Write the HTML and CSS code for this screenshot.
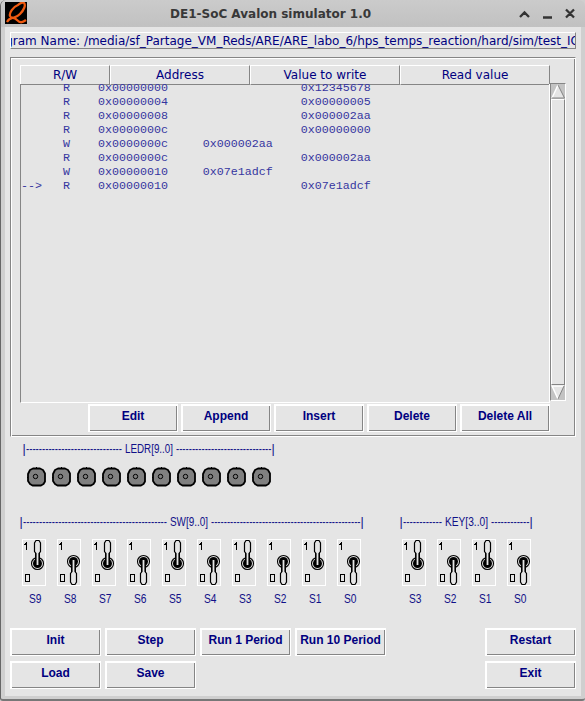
FILE: index.html
```html
<!DOCTYPE html>
<html lang="en">
<head>
<meta charset="utf-8">
<title>DE1-SoC Avalon simulator 1.0</title>
<link rel="stylesheet" href="styles.css">
</head>
<body>
<svg class="defs" width="0" height="0">
  <symbol id="led" viewBox="0 0 25 21">
    <path d="M9.500 0v2M-.5 10.500h2" stroke="#000"/>
    <path d="M6 1.500h7l3 1.500 2 3.500v8l-1.500 2.500-2.500 1.500H5.500L3 17l-2-3V7l2-4z" fill="#808080" stroke="#000" stroke-width="1.800" stroke-linejoin="round"/>
    <circle cx="8.500" cy="9.500" r="2.200" fill="none" stroke="#000"/>
  </symbol>
  <g id="lever" shape-rendering="auto">
    <circle cx="15.500" cy="24.500" r="6" fill="none" stroke="#000" stroke-width="1.100"/>
    <circle cx="15.500" cy="24.500" r="4.500" fill="#000"/>
    <path d="M14 26.500V14.500l-1.500-2V4l1.500-2.500h3L18.500 4v8.500l-1.500 2v12z" fill="#e5e5e5" stroke="#000" stroke-width="1.200"/>
    <path d="M13.500 14v8M17.500 14v8" stroke="#000"/>
  </g>
  <g id="plate">
    <rect x=".5" y=".5" width="23" height="46" fill="none" stroke="#fff"/>
    <rect x="3.500" y="35.500" width="4" height="7" fill="none" stroke="#000"/>
    <path d="M2 5h1V4h1V3h1v8H4V6H2z" fill="#000"/>
  </g>
  <symbol id="up" viewBox="0 0 24 47"><use href="#plate"/><use href="#lever"/></symbol>
  <symbol id="down" viewBox="0 0 24 47"><use href="#plate"/><use href="#lever" transform="matrix(1 0 0 -1 1 47)"/></symbol>
</svg>
<div class="window">
  <header class="titlebar">
    <svg class="logo" width="22" height="22" viewBox="0 0 22 22"><rect width="22" height="22" fill="#000"/><path d="M13 3C8 5 4 11 5 14c1 3 6 2 10-2 4-4 6-9 4-11-1-1-4 0-6 2zM2 20c3-5 7-5 10-2s5 3 9 0" fill="none" stroke="#f05a10" stroke-width="2.300"/></svg>
    <h1>DE1-SoC Avalon simulator 1.0</h1>
    <svg class="controls" width="60" height="12" viewBox="0 0 60 12" fill="none" stroke="#333" stroke-width="2.300"><path d="M5 9l4.500-4.500L14 9M28 9.500h9M51 1.500l8 8M59 1.500l-8 8"/></svg>
  </header>
  <main>
    <div class="program"><span>Program Name: /media/sf_Partage_VM_Reds/ARE/ARE_labo_6/hps_temps_reaction/hard/sim/test_IO.txt</span></div>
    <section class="panel">
      <div class="heads"><span>R/W</span><span>Address</span><span>Value to write</span><span>Read value</span></div>
      <div class="list">
<div class="view"><pre>
      R    0x00000000                   0x12345678
      R    0x00000004                   0x00000005
      R    0x00000008                   0x000002aa
      R    0x0000000c                   0x00000000
      W    0x0000000c     0x000002aa
      R    0x0000000c                   0x000002aa
      W    0x00000010     0x07e1adcf
--&gt;   R    0x00000010                   0x07e1adcf
</pre></div>
        <div class="scroll">
          <svg width="14" height="15" viewBox="0 0 14 15"><path d="M7 1L1 14h12z" fill="#e5e5e5"/><path d="M7 1L1 14" stroke="#fff" stroke-width="1.500"/><path d="M7 1l6.500 13H1" fill="none" stroke="#858585"/></svg>
          <i class="thumb"></i>
          <svg width="14" height="15" viewBox="0 0 14 15"><path d="M1 1h12L7 14z" fill="#e5e5e5"/><path d="M13 1H1l6 13" fill="none" stroke="#fff" stroke-width="1.500"/><path d="M13 1L7 14" stroke="#858585"/></svg>
        </div>
      </div>
      <div class="edit-row"><button>Edit</button><button>Append</button><button>Insert</button><button>Delete</button><button>Delete All</button></div>
    </section>
    <svg class="caption" width="560" height="16" viewBox="15 0 560 16">
      <text x="22.500" y="12">|</text><text x="26" y="12" textLength="96" data-n="30"></text><text x="125" y="12" textLength="48">LEDR[9..0]</text><text x="176" y="12" textLength="95.500" data-n="30"></text><text x="271.500" y="12">|</text>
    </svg>
    <div class="leds"></div>
    <svg class="caption second" width="560" height="16" viewBox="15 0 560 16">
      <text x="19.500" y="12">|</text><text x="23" y="12" textLength="144" data-n="45"></text><text x="170" y="12" textLength="38">SW[9..0]</text><text x="211" y="12" textLength="149.500" data-n="47"></text><text x="360.500" y="12">|</text>
      <text x="399.500" y="12">|</text><text x="403" y="12" textLength="39" data-n="12"></text><text x="445" y="12" textLength="43">KEY[3..0]</text><text x="491" y="12" textLength="38.500" data-n="12"></text><text x="529.500" y="12">|</text>
    </svg>
    <div class="switches"><div class="bank" data-state="1010101010"></div><div class="bank" data-state="1010"></div></div>
    <div class="actions"><button>Init</button><button>Step</button><button>Run 1 Period</button><button>Run 10 Period</button><button class="last">Restart</button><button>Load</button><button>Save</button><button class="last">Exit</button></div>
  </main>
</div>
<script src="app.js"></script>
</body>
</html>
```
FILE: app.js
```js
document.querySelectorAll('[data-n]').forEach(t => { t.textContent = '-'.repeat(+t.dataset.n); });
document.querySelectorAll('.caption text').forEach(t => t.setAttribute('lengthAdjust', 'spacingAndGlyphs'));
document.querySelector('.leds').innerHTML = '<svg width="25" height="21"><use href="#led"/></svg>'.repeat(10);
document.querySelectorAll('.bank').forEach(bank => {
  const states = bank.dataset.state;
  bank.innerHTML = [...states].map((s, i) =>
    `<div class="switch"><svg width="24" height="47" shape-rendering="crispEdges"><use href="#${s === '1' ? 'up' : 'down'}"/></svg>` +
    `<svg class="name" width="24" height="14"><text x="7" y="11" textLength="12.500" lengthAdjust="spacingAndGlyphs">S${states.length - 1 - i}</text></svg></div>`).join('');
});
```
FILE: styles.css
```css
* { box-sizing: border-box; }
body { margin: 0; background: #cfcfcf; color: #000080; font: 12px "DejaVu Sans", sans-serif; }
svg { display: block; }
.defs { position: absolute; }
.window { width: 585px; height: 701px; border-left: 1px solid #666; border-bottom: 2px solid #777; border-radius: 6px 6px 3px 3px; padding: 0 4px; background: #cfcfcf; }
.titlebar { height: 27px; margin: 0 -4px; padding: 2px 10px 0 4px; display: flex; align-items: flex-start; background: linear-gradient(#cbcbcb, #c1c1c1); border-radius: 6px 6px 0 0; }
.titlebar h1 { margin: 0; flex: 1; padding-left: 143px; font: bold 12px/24px "DejaVu Sans", sans-serif; color: #383838; white-space: nowrap; }
.controls { margin-top: 6px; }
main { width: 576px; height: 669px; background: #e5e5e5; padding: 5px; }
.program { width: 566px; height: 17px; border: 1px solid; border-color: #fff #858585 #858585 #fff; overflow: hidden; display: flex; justify-content: center; line-height: 16px; white-space: nowrap; }
.panel { width: 566px; height: 380px; margin-top: 8px; padding: 7px 9px; border: 1px solid; border-color: #858585 #fff #fff #858585; box-shadow: inset 1px 1px #fff, inset -1px -1px #858585; }
.heads { display: grid; grid-template-columns: 90px 140px 150px 150px; height: 19px; }
.heads span { border: 1px solid; border-color: #fff #858585 #858585 #fff; text-align: center; line-height: 18px; }
.list { display: flex; height: 319px; }
.view { width: 530px; height: 319px; border-left: 1px solid #858585; border-right: 1px solid #fff; border-bottom: 1px solid #fff; overflow: hidden; }
pre { margin: -3px 0 0; font: 11.67px/14px "Liberation Mono", monospace; color: #3535a0; }
.scroll { width: 16px; height: 318px; margin-top: -1px; border: 1px solid; border-color: #858585 #fff #fff #858585; background: #c3c3c3; display: flex; flex-direction: column; }
.thumb { flex: 1; background: #e5e5e5; border: 1px solid; border-color: #fff #858585 #858585 #fff; }
.edit-row { display: flex; gap: 3px; margin: 1px 0 0 68px; }
button { width: 90px; height: 28px; padding: 0 0 4px; border: 1px solid #fff; box-shadow: inset 1px 1px #fff, inset -1px -1px #858585; background: #e5e5e5; color: #000080; font: bold 12px/14px "Liberation Sans", sans-serif; white-space: nowrap; }
.caption { margin: 4px 0 0 5px; }
.caption text, .name text { font: 12.5px "Liberation Sans", sans-serif; fill: #101088; }
.leds { display: flex; margin: 10px 0 0 17px; }
.second { margin-top: 26px; }
.switches { display: flex; gap: 41px; margin: 9px 0 0 12px; }
.bank { display: flex; gap: 11px; }
.switch { width: 24px; }
.name { margin-top: 6px; }
.actions { display: grid; grid-template-columns: 91px 91px 91px 91px 1fr; gap: 5px 4px; margin-top: 22px; }
.actions button { width: 91px; }
.actions .last { grid-column: 5; justify-self: end; }
```
